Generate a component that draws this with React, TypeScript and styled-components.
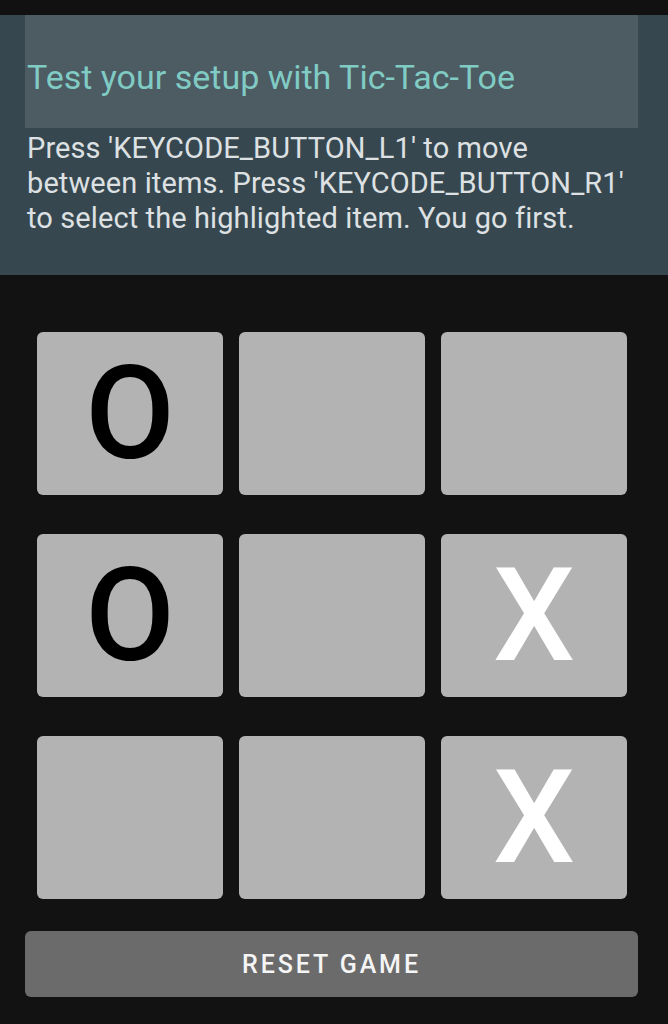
import React from "react";
import styled, { createGlobalStyle } from "styled-components";

const Global = createGlobalStyle`
  html, body { margin: 0; padding: 0; background: #121212; }
  body { font-family: Roboto, "Noto Sans", sans-serif; }
`;

const Page = styled.div`
  width: 668px;
  min-height: 1024px;
  background: #121212;
  display: flex;
  flex-direction: column;
`;

const TopBar = styled.div`
  height: 15px;
  background: #111111;
`;

const Header = styled.div`
  background: #37474f;
  height: 260px;
  padding: 0 0 0 25px;
  box-sizing: border-box;
`;

const TitleBox = styled.div`
  height: 113px;
  width: 613px;
  background: #4d5b63;
  display: flex;
  align-items: center;
  padding-left: 2px;
  box-sizing: border-box;
  padding-top: 10px;
`;

const Title = styled.h1`
  margin: 0;
  font-family: Roboto, sans-serif;
  font-weight: 400;
  font-size: 34px;
  color: #80cbc4;
  letter-spacing: 0;
`;

const Body = styled.p`
  margin: 3px 0 0 2px;
  font-family: Roboto, sans-serif;
  font-size: 29px;
  line-height: 35px;
  color: #dde1e3;
  letter-spacing: 0.1px;
  white-space: nowrap;
`;

const Board = styled.div`
  display: grid;
  grid-template-columns: repeat(3, 186px);
  grid-template-rows: repeat(3, 163px);
  column-gap: 16px;
  row-gap: 39px;
  margin: 57px 0 0 37px;
`;

const Cell = styled.div<{ $mark: "X" | "O" | "" }>`
  background: #b3b3b3;
  border-radius: 6px;
  display: flex;
  align-items: center;
  justify-content: center;
  font-family: Roboto, sans-serif;
  font-size: 130px;
  font-weight: 500;
  line-height: 1;
  color: ${(p) => (p.$mark === "X" ? "#ffffff" : "#000000")};
`;

const ResetButton = styled.button`
  margin: 32px 0 0 25px;
  width: 613px;
  height: 66px;
  background: #6b6b6b;
  border: none;
  border-radius: 6px;
  color: #f5f5f5;
  font-family: Roboto, sans-serif;
  font-size: 25px;
  font-weight: 500;
  letter-spacing: 2.9px;
  text-transform: uppercase;
  padding: 0;
`;

const cells: ("X" | "O" | "")[] = ["O", "", "", "O", "", "X", "", "", "X"];

export default function App() {
  return (
    <Page>
      <Global />
      <TopBar />
      <Header>
        <TitleBox>
          <Title>Test your setup with Tic-Tac-Toe</Title>
        </TitleBox>
        <Body>
          Press 'KEYCODE_BUTTON_L1' to move
          <br />
          between items. Press 'KEYCODE_BUTTON_R1'
          <br />
          to select the highlighted item. You go first.
        </Body>
      </Header>
      <Board>
        {cells.map((m, i) => (
          <Cell key={i} $mark={m}>
            {m}
          </Cell>
        ))}
      </Board>
      <ResetButton>Reset Game</ResetButton>
    </Page>
  );
}
